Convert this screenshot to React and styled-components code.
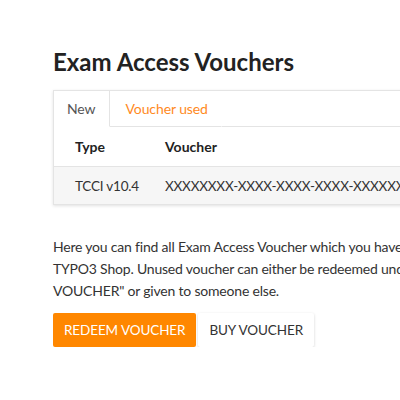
import React, { useState } from 'react';
import styled, { createGlobalStyle } from 'styled-components';

const vouchers = [{ type: 'TCCI v10.4', code: 'XXXXXXXX-XXXX-XXXX-XXXX-XXXXXXXXXXXX' }];

const App = () => {
  const [tab, setTab] = useState('new');

  return (
    <>
      <GlobalStyle />
      <Page>
        <Title>Exam Access Vouchers</Title>

        <Card>
          <Tabs>
            <Tab active={tab === 'new'} onClick={() => setTab('new')}>
              New
            </Tab>
            <Tab active={tab === 'used'} onClick={() => setTab('used')}>
              Voucher used
            </Tab>
            <TabFill />
          </Tabs>

          <Table>
            <thead>
              <tr>
                <Th width="69px">Type</Th>
                <Th>Voucher</Th>
              </tr>
            </thead>
            <tbody>
              {vouchers.map(({ type, code }) => (
                <Row key={code}>
                  <Td>{type}</Td>
                  <Td>{code}</Td>
                </Row>
              ))}
            </tbody>
          </Table>
        </Card>

        <Text>
          Here you can find all Exam Access Voucher which you have bought in the
          <br />
          TYPO3 Shop. Unused voucher can either be redeemed under "REDEEM
          <br />
          VOUCHER" or given to someone else.
        </Text>

        <Actions>
          <Button primary>Redeem voucher</Button>
          <Button>Buy voucher</Button>
        </Actions>
      </Page>
    </>
  );
};

const GlobalStyle = createGlobalStyle`
  html, body {
    margin: 0;
    padding: 0;
    background: #fff;
    overflow: hidden;
  }

  body {
    font-family: Lato, 'Open Sans', sans-serif;
    color: #333;
  }
`;

const Page = styled.div`
  width: 600px;
  padding: 48px 0 0 53px;
`;

const Title = styled.h1`
  margin: 0 0 14px;
  font-size: 24px;
  font-weight: 700;
  line-height: 28px;
  color: #222;
`;

const Card = styled.div`
  width: 540px;
  background: #fff;
  border: 1px solid #e4e4e4;
  box-shadow: 0 1px 3px rgb(0 0 0 / 12%);
`;

const Tabs = styled.div`
  display: flex;
  height: 36px;
`;

const Tab = styled.button`
  padding: 0 13px;
  border: none;
  border-right: 1px solid ${({ active }) => (active ? '#e4e4e4' : 'transparent')};
  border-bottom: 1px solid ${({ active }) => (active ? 'transparent' : '#e4e4e4')};
  background: #fff;
  font-family: inherit;
  font-size: 14px;
  letter-spacing: -0.1px;
  color: ${({ active }) => (active ? '#555' : '#ff8a1e')};
  cursor: pointer;

  & + & {
    padding-left: 16px;
  }
`;

const TabFill = styled.div`
  flex: 1;
  border-bottom: 1px solid #e4e4e4;
`;

const Table = styled.table`
  width: 100%;
  border-collapse: collapse;
  font-size: 14px;
`;

const Th = styled.th`
  width: ${({ width }) => width || 'auto'};
  height: 39px;
  padding: 0 0 0 21px;
  text-align: left;
  font-weight: 700;
  color: #222;
`;

const Row = styled.tr`
  background: #f6f6f6;
  border-top: 1px solid #e4e4e4;
`;

const Td = styled.td`
  height: 37px;
  padding: 0 0 0 21px;
  font-size: 13.5px;
  letter-spacing: -0.2px;
  color: #333;
  white-space: nowrap;
`;

const Text = styled.p`
  margin: 31px 0 0;
  font-size: 14px;
  letter-spacing: -0.2px;
  line-height: 22px;
  color: #333;
  white-space: nowrap;
`;

const Actions = styled.div`
  display: flex;
  gap: 2px;
  margin-top: 11px;
`;

const Button = styled.button`
  height: 34px;
  padding: 0 11px;
  border: none;
  border-radius: 2px;
  background: ${({ primary }) => (primary ? '#ff8700' : '#fff')};
  box-shadow: ${({ primary }) => (primary ? 'none' : '0 1px 3px rgb(0 0 0 / 18%)')};
  font-family: inherit;
  font-size: 13.5px;
  letter-spacing: -0.1px;
  text-transform: uppercase;
  color: ${({ primary }) => (primary ? '#fff' : '#333')};
  cursor: pointer;
`;

export default App;
